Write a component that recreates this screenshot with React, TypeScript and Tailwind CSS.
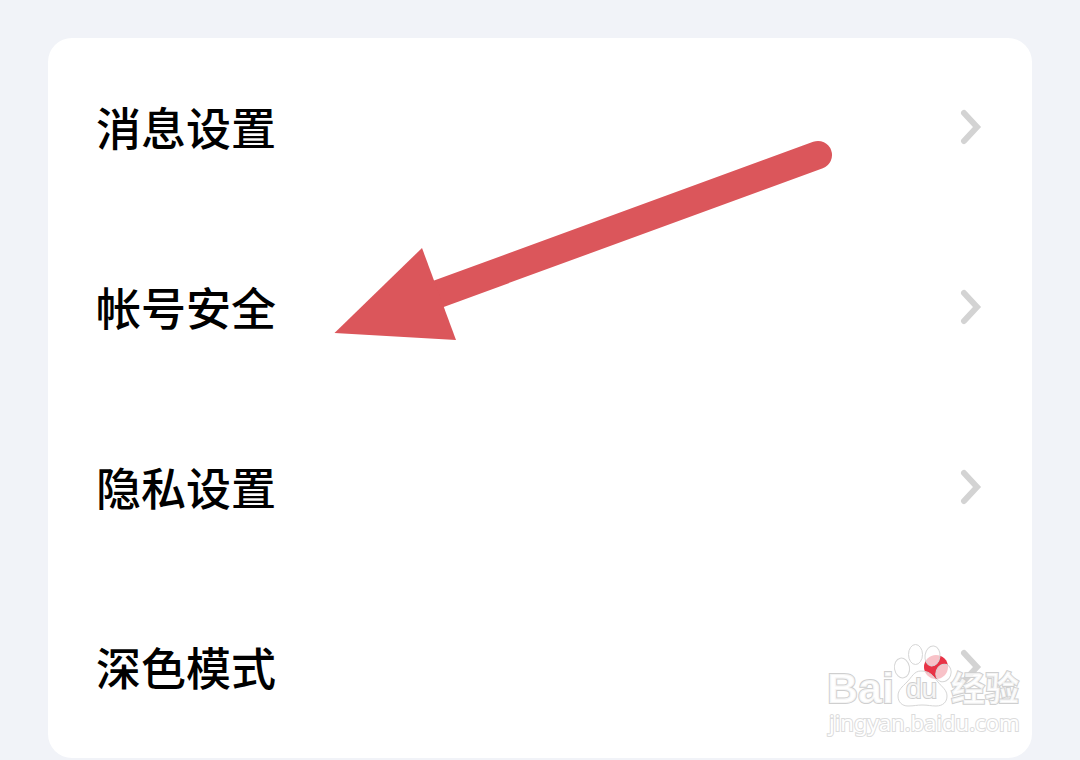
import React from 'react';

interface SettingItem {
  id: string;
  label: string;
  hasUpdate?: boolean;
}

const items: SettingItem[] = [
  { id: 'message', label: '消息设置' },
  { id: 'account', label: '帐号安全' },
  { id: 'privacy', label: '隐私设置' },
  { id: 'dark-mode', label: '深色模式', hasUpdate: true },
];

const Chevron: React.FC = () => (
  <svg width="22" height="38" viewBox="0 0 22 38" fill="none" aria-hidden="true">
    <path d="M4 5L17 19L4 33" stroke="#d3d3d3" strokeWidth="6" strokeLinecap="round" strokeLinejoin="miter" />
  </svg>
);

const SettingRow: React.FC<{ item: SettingItem }> = ({ item }) => (
  <li>
    <a href={`#${item.id}`} className="flex h-[180px] items-center justify-between pr-[50px] pb-0.5 pl-12">
      <span className="text-[45px] leading-[60px] font-medium text-black">{item.label}</span>
      <span className="flex items-center gap-3">
        {item.hasUpdate && <span className="size-6 rounded-full bg-[#e83346]" />}
        <Chevron />
      </span>
    </a>
  </li>
);

// Red arrow pointing at the account row
const PointerArrow: React.FC = () => (
  <svg
    className="pointer-events-none absolute top-[102px] left-[286px]"
    width="500"
    height="202"
    viewBox="334 140 500 202"
    aria-hidden="true"
  >
    <path d="M430 297L818 155" stroke="#db565b" strokeWidth="28" strokeLinecap="round" />
    <path d="M334.500 333L422 248L456 340Z" fill="#db565b" />
  </svg>
);

const Watermark: React.FC = () => (
  <svg
    className="pointer-events-none absolute right-2 bottom-4"
    width="204"
    height="102"
    viewBox="820 640 204 102"
    role="img"
    aria-label="Baidu 经验 jingyan.baidu.com"
  >
    <g fill="#ffffff" fillOpacity="0.7" stroke="#d6d6d6" strokeWidth="1">
      <ellipse cx="902" cy="668" rx="7.500" ry="10" transform="rotate(-10 902 668)" />
      <ellipse cx="915.500" cy="654.500" rx="7" ry="10" />
      <ellipse cx="932.500" cy="656" rx="7.500" ry="10" transform="rotate(8 932.500 656)" />
      <ellipse cx="943.500" cy="673" rx="7.500" ry="9" transform="rotate(20 943.500 673)" />
      <path d="M921 671C914 671 912 677 907 682C902 687 898 690 898 696C898 702 902 706 908 706C914 706 917 705 922 705C928 705 931 706 936 706C943 706 947 702 947 696C947 690 942 687 938 682C933 676 930 671 921 671Z" />
    </g>
    <g fill="#ffffff" fillOpacity="0.8" stroke="#cfcfcf" strokeWidth="2" paintOrder="stroke">
      <text x="827" y="703" fontFamily="'Liberation Sans', Arial, sans-serif" fontWeight="700" fontSize="43">
        Bai
      </text>
      <text x="906" y="698" fontFamily="'Liberation Sans', Arial, sans-serif" fontSize="28">
        du
      </text>
      <text x="951" y="701" fontFamily="'Noto Sans CJK SC', sans-serif" fontWeight="700" fontSize="34">
        经验
      </text>
    </g>
    <text
      x="829"
      y="731"
      fontFamily="'Noto Sans', sans-serif"
      fontSize="22"
      fill="#ffffff"
      stroke="#dcdcdc"
      strokeWidth="2"
      paintOrder="stroke"
    >
      jingyan.baidu.com
    </text>
  </svg>
);

const App: React.FC = () => {
  return (
    <main className="min-h-screen bg-[#f1f3f8] px-12 pt-[38px] font-['Noto_Sans_CJK_SC',sans-serif]">
      <section className="relative rounded-3xl bg-white">
        <ul>
          {items.map((item) => (
            <SettingRow key={item.id} item={item} />
          ))}
        </ul>
        <PointerArrow />
        <Watermark />
      </section>
    </main>
  );
};

export default App;
